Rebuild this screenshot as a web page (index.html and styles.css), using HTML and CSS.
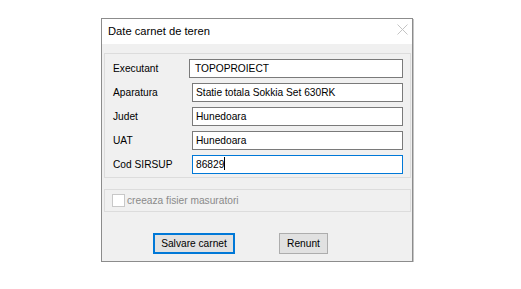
FILE: index.html
```html
<!DOCTYPE html>
<html lang="ro">
<head>
    <meta charset="UTF-8">
    <title>Date carnet de teren</title>
    <link rel="stylesheet" href="styles.css">
</head>
<body>
    <div class="dialog">
        <div class="titlebar">
            <span class="title">Date carnet de teren</span>
            <svg class="close" width="11" height="11" viewBox="0 0 11 11">
                <path d="M0.5 0.5 L10.5 10.5 M10.5 0.5 L0.5 10.5" stroke="#c4c4c4" stroke-width="1" fill="none"/>
            </svg>
        </div>
        <div class="content">
            <div class="group fields">
                <div class="row">
                    <span class="label">Executant</span>
                    <div class="input first">TOPOPROIECT</div>
                </div>
                <div class="row">
                    <span class="label">Aparatura</span>
                    <div class="input">Statie totala Sokkia Set 630RK</div>
                </div>
                <div class="row">
                    <span class="label">Judet</span>
                    <div class="input">Hunedoara</div>
                </div>
                <div class="row">
                    <span class="label">UAT</span>
                    <div class="input">Hunedoara</div>
                </div>
                <div class="row">
                    <span class="label">Cod SIRSUP</span>
                    <div class="input focused">86829<span class="caret"></span></div>
                </div>
            </div>

            <div class="group options">
                <span class="checkbox"></span>
                <span class="option-text">creeaza fisier masuratori</span>
            </div>

            <div class="buttons">
                <button class="btn default">Salvare carnet</button>
                <button class="btn">Renunt</button>
            </div>
        </div>
    </div>
</body>
</html>
```

FILE: styles.css
```css
body {
    margin: 0;
    background: white;
    font-family: 'Liberation Sans', Arial, sans-serif;
    font-size: 10.2px;
    color: #000;
}
.dialog {
    box-sizing: border-box;
    width: 312px;
    margin: 18px 0 0 101px;
    border: 1px solid #8c8c8c;
    box-shadow: 1px 1px 0 #c6c6c6;
    background: #f0f0f0;
}
.titlebar {
    height: 25px;
    background: white;
    display: flex;
    align-items: center;
    justify-content: space-between;
    padding: 0 4px 0 6px;
}
.title {
    font-size: 11.2px;
    margin-top: -1px;
}
.close {
    display: block;
    margin-top: -4px;
}
.content {
    padding: 9px 1px 7px 2px;
}
.group {
    border: 1px solid #dcdcdc;
}
.fields {
    padding: 5px 7px 3px 8px;
    display: flex;
    flex-direction: column;
    gap: 5px;
}
.row {
    display: flex;
    align-items: center;
}
.label {
    width: 79px;
    flex: none;
}
.input {
    flex: 1;
    box-sizing: border-box;
    height: 19px;
    line-height: 17px;
    padding: 0 3px;
    background: white;
    border: 1px solid #7a7a7a;
    white-space: nowrap;
}
.input.first {
    margin-left: -3px;
    padding-left: 5px;
}
.input.focused {
    border-color: #0078d7;
}
.caret {
    display: inline-block;
    width: 1px;
    height: 13px;
    background: #000;
    vertical-align: -2px;
}
.options {
    margin-top: 11px;
    height: 23px;
    box-sizing: border-box;
    display: flex;
    align-items: center;
    padding-left: 7px;
    gap: 2px;
}
.checkbox {
    width: 11px;
    height: 11px;
    border: 1px solid #c8c8c8;
    background: white;
}
.option-text {
    color: #8a8a8a;
}
.buttons {
    display: flex;
    gap: 44px;
    margin-top: 21px;
    padding-left: 49px;
}
.btn {
    box-sizing: border-box;
    height: 21px;
    font-family: inherit;
    font-size: 10.2px;
    color: #000;
    background: #e1e1e1;
    border: 1px solid #adadad;
    padding: 0;
    width: 49px;
}
.btn.default {
    width: 82px;
    border: 2px solid #0078d7;
}
```
